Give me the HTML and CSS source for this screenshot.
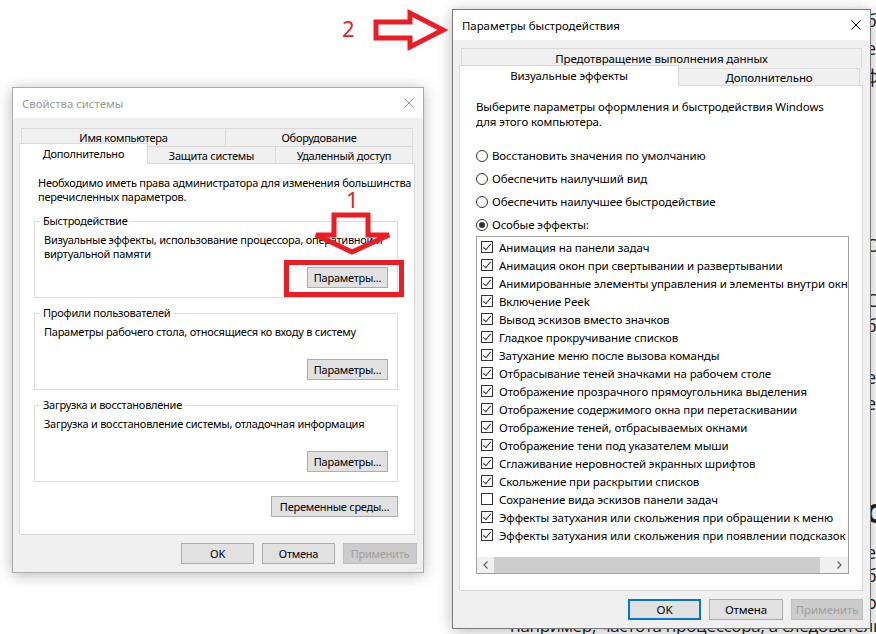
FILE: index.html
```html
<!DOCTYPE html>
<html lang="ru">
<head>
    <meta charset="UTF-8">
    <title>Свойства системы</title>
    <link rel="stylesheet" href="styles.css">
</head>
<body>
<div class="desktop">
    <!-- страница за окнами -->
    <div class="page-behind">
        <span class="frag f1">б</span>
        <span class="frag f2">е</span>
        <span class="frag f3">ф</span>
        <span class="frag f4">О</span>
        <span class="frag f5">С</span>
        <span class="frag f6">б</span>
        <span class="frag f7">е</span>
        <span class="frag f8">е</span>
        <span class="frag f9 heading">О</span>
        <span class="frag f10">е</span>
        <span class="frag f11">б</span>
        <span class="frag f12">о</span>
        <div class="page-line">например, частота процессора, а следовательно</div>
    </div>

    <!-- Свойства системы -->
    <div class="win sys-win">
        <div class="titlebar inactive">
            <span class="title">Свойства системы</span>
            <svg class="close" width="10" height="10" viewBox="0 0 10 10"><path d="M0.5 0.5L9.5 9.5M9.5 0.5L0.5 9.5"/></svg>
        </div>
        <div class="win-body sys-body">
            <div class="tab-row back">
                <div class="tab t-name">Имя компьютера</div>
                <div class="tab t-hw">Оборудование</div>
            </div>
            <div class="tab-row front">
                <div class="tab active t-adv">Дополнительно</div>
                <div class="tab t-prot">Защита системы</div>
                <div class="tab t-remote">Удаленный доступ</div>
            </div>
            <div class="panel sys-panel">
                <p class="intro">Необходимо иметь права администратора для изменения большинства<br>перечисленных параметров.</p>

                <fieldset class="group">
                    <legend>Быстродействие</legend>
                    <div class="group-body">
                        <p>Визуальные эффекты, использование процессора, оперативной и<br>виртуальной памяти</p>
                        <button class="btn btn-params">Параметры...</button>
                    </div>
                </fieldset>

                <fieldset class="group">
                    <legend>Профили пользователей</legend>
                    <div class="group-body">
                        <p>Параметры рабочего стола, относящиеся ко входу в систему</p>
                        <button class="btn btn-params">Параметры...</button>
                    </div>
                </fieldset>

                <fieldset class="group">
                    <legend>Загрузка и восстановление</legend>
                    <div class="group-body">
                        <p>Загрузка и восстановление системы, отладочная информация</p>
                        <button class="btn btn-params">Параметры...</button>
                    </div>
                </fieldset>

                <button class="btn btn-env">Переменные среды...</button>
            </div>
            <div class="footer sys-footer">
                <button class="btn b-ok">OK</button>
                <button class="btn b-cancel">Отмена</button>
                <button class="btn b-apply" disabled>Применить</button>
            </div>
        </div>
    </div>

    <!-- Параметры быстродействия -->
    <div class="win perf-win">
        <div class="titlebar">
            <span class="title">Параметры быстродействия</span>
            <svg class="close" width="10" height="10" viewBox="0 0 10 10"><path d="M0.5 0.5L9.5 9.5M9.5 0.5L0.5 9.5"/></svg>
        </div>
        <div class="win-body perf-body">
            <div class="tab-row back tall">
                <div class="tab t-dep">Предотвращение выполнения данных</div>
            </div>
            <div class="tab-row front">
                <div class="tab active t-vis">Визуальные эффекты</div>
                <div class="tab t-more">Дополнительно</div>
            </div>
            <div class="panel perf-panel">
                <p class="perf-intro">Выберите параметры оформления и быстродействия Windows<br>для этого компьютера.</p>

                <div class="radios">
                    <label class="radio-row"><span class="radio"></span>Восстановить значения по умолчанию</label>
                    <label class="radio-row"><span class="radio"></span>Обеспечить наилучший вид</label>
                    <label class="radio-row"><span class="radio"></span>Обеспечить наилучшее быстродействие</label>
                    <label class="radio-row"><span class="radio on"></span>Особые эффекты:</label>
                </div>

                <div class="listbox">
                    <div class="items">
                        <div class="item"><span class="check on"></span>Анимация на панели задач</div>
                        <div class="item"><span class="check on"></span>Анимация окон при свертывании и развертывании</div>
                        <div class="item"><span class="check on"></span>Анимированные элементы управления и элементы внутри окна</div>
                        <div class="item"><span class="check on"></span>Включение Peek</div>
                        <div class="item"><span class="check on"></span>Вывод эскизов вместо значков</div>
                        <div class="item"><span class="check on"></span>Гладкое прокручивание списков</div>
                        <div class="item"><span class="check on"></span>Затухание меню после вызова команды</div>
                        <div class="item"><span class="check on"></span>Отбрасывание теней значками на рабочем столе</div>
                        <div class="item"><span class="check on"></span>Отображение прозрачного прямоугольника выделения</div>
                        <div class="item"><span class="check on"></span>Отображение содержимого окна при перетаскивании</div>
                        <div class="item"><span class="check on"></span>Отображение теней, отбрасываемых окнами</div>
                        <div class="item"><span class="check on"></span>Отображение тени под указателем мыши</div>
                        <div class="item"><span class="check on"></span>Сглаживание неровностей экранных шрифтов</div>
                        <div class="item"><span class="check on"></span>Скольжение при раскрытии списков</div>
                        <div class="item"><span class="check"></span>Сохранение вида эскизов панели задач</div>
                        <div class="item"><span class="check on"></span>Эффекты затухания или скольжения при обращении к меню</div>
                        <div class="item"><span class="check on"></span>Эффекты затухания или скольжения при появлении подсказок</div>
                    </div>
                    <div class="hscroll">
                        <span class="sb-btn"><svg width="5" height="8" viewBox="0 0 5 8"><path d="M4.5 0.5L1 4L4.5 7.5"/></svg></span>
                        <span class="sb-thumb"></span>
                        <span class="sb-space"></span>
                        <span class="sb-btn"><svg width="5" height="8" viewBox="0 0 5 8"><path d="M0.5 0.5L4 4L0.5 7.5"/></svg></span>
                    </div>
                </div>
            </div>
            <div class="footer perf-footer">
                <button class="btn b-ok default">OK</button>
                <button class="btn b-cancel">Отмена</button>
                <button class="btn b-apply" disabled>Применить</button>
            </div>
        </div>
    </div>

    <!-- пометки поверх скриншота -->
    <svg class="marks" width="876" height="634" viewBox="0 0 876 634">
        <path d="M376 22H410V13L443 30L410 47V38H376Z"/>
        <path d="M334 215H368V235H389L352 252L316 235H334Z"/>
        <rect x="286.5" y="262.5" width="115" height="32"/>
    </svg>
    <span class="mark-num n1">1</span>
    <span class="mark-num n2">2</span>
</div>
</body>
</html>
```

FILE: styles.css
```css
* {
    margin: 0;
    padding: 0;
    box-sizing: border-box;
}

body {
    font-family: "Noto Sans", "Open Sans", sans-serif;
    font-size: 12px;
    color: #000;
    background: #fff;
    overflow: hidden;
}

.desktop {
    position: relative;
    width: 876px;
    height: 634px;
    overflow: hidden;
}

/* текст страницы, видный по краям */
.page-behind {
    font-family: "Open Sans", "Noto Sans", sans-serif;
    font-size: 18px;
    line-height: 24px;
    color: #222;
}

.frag {
    position: absolute;
    left: 866px;
}

.f1 { top: 8px; }
.f2 { top: 36px; }
.f3 { top: 64px; }
.f4 { top: 233px; }
.f5 { top: 288px; }
.f6 { top: 313px; }
.f7 { top: 365px; }
.f8 { top: 391px; }
.f9 { top: 498px; }
.f10 { top: 540px; }
.f11 { top: 563px; }
.f12 { top: 590px; }

.heading {
    font-size: 26px;
    font-weight: bold;
    line-height: 30px;
}

.page-line {
    position: absolute;
    left: 510px;
    top: 614px;
    white-space: nowrap;
    font-size: 17px;
    letter-spacing: -0.3px;
}

/* окна */
.win {
    position: absolute;
    display: flex;
    flex-direction: column;
    background: #f0f0f0;
    border: 1px solid #7a7a7a;
    box-shadow: 0 2px 14px rgba(0, 0, 0, 0.28);
}

.sys-win {
    left: 12px;
    top: 87px;
    width: 412px;
    height: 486px;
    border-color: #ababab;
    font-size: 11px;
    letter-spacing: -0.25px;
}

.perf-win {
    left: 452px;
    top: 9px;
    width: 419px;
    height: 620px;
    font-size: 11.5px;
    letter-spacing: -0.1px;
}

.titlebar {
    height: 30px;
    flex-shrink: 0;
    background: #fff;
    display: flex;
    align-items: center;
    justify-content: space-between;
    padding: 0 9px;
    font-size: 11.4px;
    letter-spacing: 0;
}

.titlebar .close path {
    stroke: #000;
    stroke-width: 1;
    fill: none;
}

.titlebar.inactive .title {
    color: #999;
}

.titlebar.inactive .close path {
    stroke: #999;
}

.win-body {
    flex: 1;
    display: flex;
    flex-direction: column;
    padding: 10px 8px 8px 6px;
}

.perf-body {
    padding: 8px 7px 8px 6px;
}

/* вкладки */
.tab-row {
    display: flex;
    align-items: flex-end;
    flex-shrink: 0;
}

.tab-row.back {
    height: 18px;
    margin-left: 2px;
}

.tab-row.back.tall {
    height: 20px;
}

.tab-row.front {
    height: 17px;
}

.tab {
    height: 100%;
    display: flex;
    align-items: center;
    justify-content: center;
    background: #f0f0f0;
    border: 1px solid #d9d9d9;
    border-bottom: none;
    white-space: nowrap;
}

.tab + .tab {
    margin-left: -1px;
}

.tab.active {
    height: 21px;
    margin-bottom: -1px;
    background: #fff;
    position: relative;
    z-index: 2;
    padding-bottom: 1px;
}

.t-name { width: 205px; }
.t-hw { width: 188px; }
.t-adv { width: 129px; }
.t-prot { width: 129px; }
.t-remote { width: 138px; }
.t-dep { width: 401px; }
.t-vis { width: 220px; }
.t-more { width: 182px; }

.panel {
    flex: 1;
    background: #fff;
    border: 1px solid #d9d9d9;
    display: flex;
    flex-direction: column;
}

/* свойства системы */
.sys-panel {
    padding: 12px 16px 0 14px;
}

.intro {
    line-height: 14px;
    padding-left: 4px;
    white-space: nowrap;
}

.group {
    border: 1px solid #dcdcdc;
    min-width: 0;
    margin-top: 8px;
}

.intro + .group {
    margin-top: 10px;
}

.group legend {
    margin-left: 5px;
    padding: 0 3px;
    line-height: 14px;
}

.group-body {
    height: 69px;
    padding: 5px 9px 9px;
    display: flex;
    flex-direction: column;
    justify-content: space-between;
    align-items: flex-start;
    line-height: 14px;
    white-space: nowrap;
}

.btn {
    font-family: inherit;
    font-size: inherit;
    letter-spacing: inherit;
    color: #000;
    height: 21px;
    background: #e1e1e1;
    border: 1px solid #adadad;
    display: flex;
    align-items: center;
    justify-content: center;
    white-space: nowrap;
}

.btn-params {
    width: 81px;
    align-self: flex-end;
}

.btn-env {
    width: 127px;
    margin-top: 14px;
    align-self: flex-end;
}

.footer {
    display: flex;
    justify-content: flex-end;
    gap: 8px;
    margin-top: 8px;
    flex-shrink: 0;
}

.sys-footer {
    margin-right: -2px;
}

.sys-footer .b-ok { width: 73px; }
.sys-footer .b-cancel { width: 73px; }
.sys-footer .b-apply { width: 74px; }

.perf-footer .b-ok { width: 73px; }
.perf-footer .b-cancel { width: 74px; }
.perf-footer .b-apply { width: 72px; }

.btn.default {
    border: 2px solid #0078d7;
}

.btn:disabled {
    background: #cccccc;
    border-color: #bfbfbf;
    color: #a0a0a0;
}

/* параметры быстродействия */
.perf-panel {
    padding: 13px 16px 0;
}

.perf-intro {
    line-height: 15px;
    white-space: nowrap;
}

.radios {
    margin-top: 15px;
}

.radio-row {
    height: 23px;
    display: flex;
    align-items: center;
    gap: 4px;
    white-space: nowrap;
}

.radio {
    width: 12px;
    height: 12px;
    border: 1px solid #333;
    border-radius: 50%;
    display: flex;
    align-items: center;
    justify-content: center;
}

.radio.on::after {
    content: "";
    width: 6px;
    height: 6px;
    border-radius: 50%;
    background: #333;
}

.listbox {
    width: 373px;
    height: 338px;
    border: 1px solid #a0a0a0;
    display: flex;
    flex-direction: column;
}

.items {
    flex: 1;
    padding-top: 1px;
    overflow: hidden;
}

.item {
    height: 18px;
    display: flex;
    align-items: center;
    gap: 6px;
    padding-left: 4px;
    white-space: nowrap;
}

.check {
    width: 12px;
    height: 12px;
    flex-shrink: 0;
    border: 1px solid #333;
    position: relative;
}

.check.on::after {
    content: "";
    position: absolute;
    left: 3px;
    top: 0px;
    width: 3px;
    height: 7px;
    border-right: 1px solid #333;
    border-bottom: 1px solid #333;
    transform: rotate(40deg);
}

.hscroll {
    height: 16px;
    flex-shrink: 0;
    display: flex;
    background: #f0f0f0;
}

.sb-btn {
    width: 17px;
    display: flex;
    align-items: center;
    justify-content: center;
}

.sb-btn path {
    stroke: #606060;
    stroke-width: 1.2;
    fill: none;
}

.sb-thumb {
    width: 326px;
    background: #cdcdcd;
}

.sb-space {
    flex: 1;
}

/* красные стрелки и рамка */
.marks {
    position: absolute;
    left: 0;
    top: 0;
    pointer-events: none;
}

.marks path,
.marks rect {
    fill: none;
    stroke: #ed1c24;
    stroke-width: 5;
    stroke-linejoin: miter;
}

.mark-num {
    position: absolute;
    font-family: "Noto Sans", sans-serif;
    font-size: 22px;
    line-height: 22px;
    color: #ed1c24;
}

.n1 {
    left: 346px;
    top: 188px;
}

.n2 {
    left: 342px;
    top: 17px;
}
```
